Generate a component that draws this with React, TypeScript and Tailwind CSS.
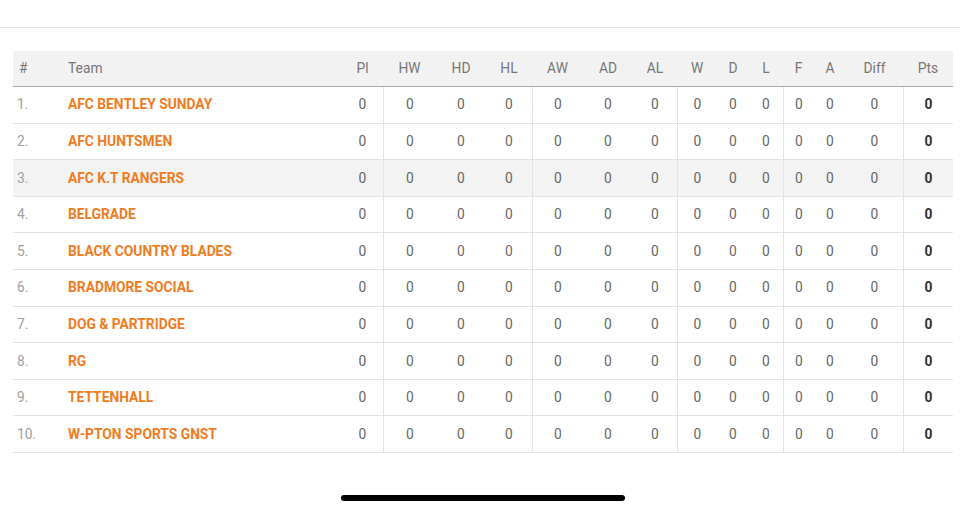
const columns = ['Pl', 'HW', 'HD', 'HL', 'AW', 'AD', 'AL', 'W', 'D', 'L', 'F', 'A', 'Diff', 'Pts']

// columns that start a new group get a divider on their left edge
const dividers = new Set(['HW', 'AW', 'W', 'F', 'Pts'])

const teams = [
  'AFC BENTLEY SUNDAY',
  'AFC HUNTSMEN',
  'AFC K.T RANGERS',
  'BELGRADE',
  'BLACK COUNTRY BLADES',
  'BRADMORE SOCIAL',
  'DOG & PARTRIDGE',
  'RG',
  'TETTENHALL',
  'W-PTON SPORTS GNST',
]

const grid =
  'grid grid-cols-[47px_282px_41px_53px_50px_46px_51px_50px_44px_40px_32px_34px_31px_32px_57px_50px]'

export default function App() {
  return (
    <div className="w-[960px] h-[512px] bg-white overflow-hidden font-['Roboto',sans-serif] text-[13.8px]">
      <div className="h-[28px] border-b border-[#e4e4e4]" />

      <div className="mt-[23px] ml-[13px] w-[940px]">
        {/* Header */}
        <div className={`${grid} h-[36px] items-center bg-[#f2f2f2] border-b border-[#a9a9a9] text-[#777]`}>
          <div className="pl-[6px]">#</div>
          <div className="pl-[8px]">Team</div>
          {columns.map((c) => (
            <div key={c} className="text-center">
              {c}
            </div>
          ))}
        </div>

        {/* Rows */}
        {teams.map((team, i) => (
          <div
            key={team}
            className={`${grid} h-[36.6px] border-b border-[#e3e3e3] ${i === 2 ? 'bg-[#f3f3f3]' : ''}`}
          >
            <div className="flex items-center pl-[4px] text-[#a0a0a0]">{i + 1}.</div>
            <div className="flex items-center pl-[8px] font-bold text-[#f07c22]">{team}</div>
            {columns.map((c) => (
              <div
                key={c}
                className={`flex items-center justify-center ${
                  dividers.has(c) ? 'border-l border-[#e3e3e3]' : ''
                } ${c === 'Pts' ? 'font-bold text-[#333]' : 'text-[#666]'}`}
              >
                0
              </div>
            ))}
          </div>
        ))}
      </div>

      {/* Home indicator */}
      <div className="flex justify-center pl-[6px] mt-[42px]">
        <div className="w-[284px] h-[6px] rounded-full bg-black" />
      </div>
    </div>
  )
}
